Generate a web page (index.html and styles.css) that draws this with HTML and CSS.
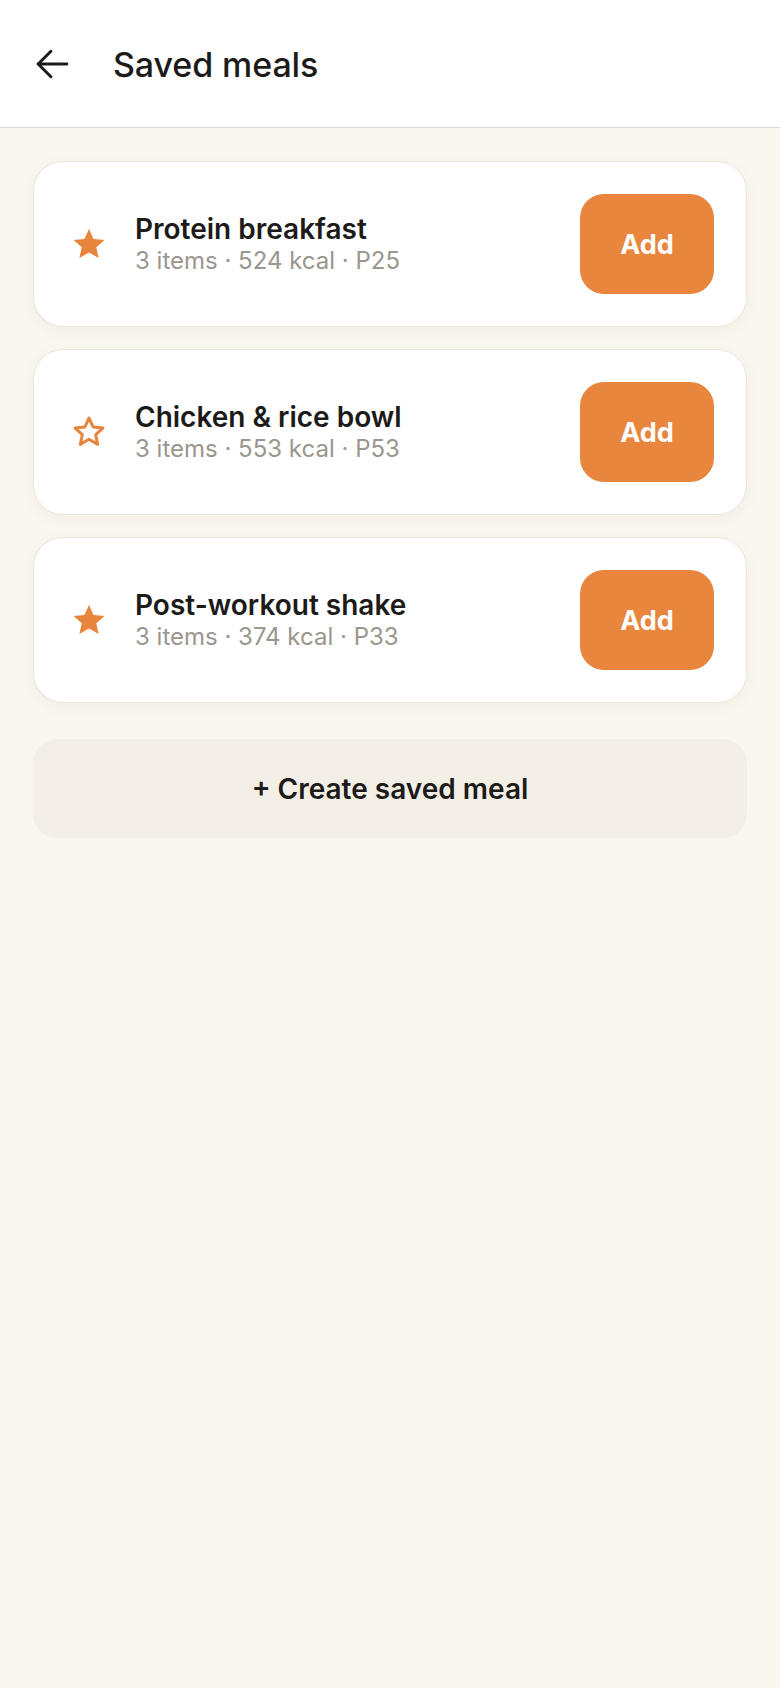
FILE: index.html
```html
<!DOCTYPE html>
<html lang="en">
<head>
  <meta charset="UTF-8">
  <meta name="viewport" content="width=device-width, initial-scale=1.0">
  <title>Saved meals</title>
  <link rel="stylesheet" href="styles.css">
</head>
<body>
  <div class="app">
    <div class="top-bar">
      <button class="back-btn" aria-label="Back">
        <svg width="34" height="34" viewBox="0 0 32 32" fill="none" stroke="#1c1b19" stroke-width="2.8" stroke-linecap="round" stroke-linejoin="round">
          <path d="M30 16H3"/>
          <path d="M15 4L3 16l12 12"/>
        </svg>
      </button>
      <h1>Saved meals</h1>
    </div>

    <div class="meal-list">
      <!-- saved meal cards -->
      <div class="meal-card">
        <div class="star">
          <svg width="38" height="38" viewBox="0 0 24 24"><path d="M12 2.5l2.9 6.3 6.9.7-5.2 4.6 1.5 6.8L12 17.4l-6.1 3.5 1.5-6.8-5.2-4.6 6.9-.7z" fill="#e8853d"/></svg>
        </div>
        <div class="meal-info">
          <div class="meal-name">Protein breakfast</div>
          <div class="meal-meta">3 items · 524 kcal · P25</div>
        </div>
        <button class="add-btn">Add</button>
      </div>

      <div class="meal-card">
        <div class="star">
          <svg width="38" height="38" viewBox="0 0 24 24"><path d="M12 3.2l2.6 5.6 6.2.7-4.6 4.2 1.3 6.1L12 16.6l-5.5 3.2 1.3-6.1-4.6-4.2 6.2-.7z" fill="none" stroke="#e8853d" stroke-width="1.9" stroke-linejoin="round"/></svg>
        </div>
        <div class="meal-info">
          <div class="meal-name">Chicken &amp; rice bowl</div>
          <div class="meal-meta">3 items · 553 kcal · P53</div>
        </div>
        <button class="add-btn">Add</button>
      </div>

      <div class="meal-card">
        <div class="star">
          <svg width="38" height="38" viewBox="0 0 24 24"><path d="M12 2.5l2.9 6.3 6.9.7-5.2 4.6 1.5 6.8L12 17.4l-6.1 3.5 1.5-6.8-5.2-4.6 6.9-.7z" fill="#e8853d"/></svg>
        </div>
        <div class="meal-info">
          <div class="meal-name">Post-workout shake</div>
          <div class="meal-meta">3 items · 374 kcal · P33</div>
        </div>
        <button class="add-btn">Add</button>
      </div>

      <button class="create-btn">+ Create saved meal</button>
    </div>
  </div>
</body>
</html>
```

FILE: styles.css
```css
* {
  box-sizing: border-box;
  margin: 0;
  padding: 0;
}
body, html {
  font-family: 'Inter', 'Noto Sans', sans-serif;
  background-color: #faf7f0;
  color: #1c1b19;
  height: 100%;
}
.app {
  min-height: 100vh;
  display: flex;
  flex-direction: column;
}
.top-bar {
  height: 128px;
  background-color: #ffffff;
  border-bottom: 1px solid #dedad3;
  display: flex;
  align-items: center;
  padding: 0 35px;
  gap: 44px;
}
.back-btn {
  background: none;
  border: none;
  display: flex;
  cursor: pointer;
}
.top-bar h1 {
  font-size: 34px;
  font-weight: 500;
  letter-spacing: -0.1px;
  margin-top: 2px;
}
.meal-list {
  padding: 33px 33px;
  display: flex;
  flex-direction: column;
  gap: 22px;
}
.meal-card {
  display: flex;
  align-items: center;
  background-color: #ffffff;
  border: 1px solid #ebe6dc;
  border-radius: 30px;
  padding: 32px 32px 32px 33px;
  box-shadow: 0 4px 14px rgba(120, 100, 70, 0.06);
}
.star {
  width: 44px;
  display: flex;
  justify-content: center;
  margin-right: 24px;
}
.meal-info {
  flex-grow: 1;
  padding-top: 2px;
}
.meal-name {
  font-size: 28px;
  font-weight: 600;
  line-height: 32px;
}
.meal-meta {
  font-size: 24px;
  color: #9b968e;
  line-height: 32px;
}
.add-btn {
  width: 134px;
  height: 100px;
  background-color: #e8863d;
  color: #ffffff;
  border: none;
  border-radius: 24px;
  font-family: inherit;
  font-size: 27px;
  font-weight: 700;
  cursor: pointer;
}
.create-btn {
  margin-top: 14px;
  height: 99px;
  background-color: #f3efe7;
  border: none;
  border-radius: 24px;
  font-family: inherit;
  font-size: 28px;
  font-weight: 600;
  color: #1c1b19;
  cursor: pointer;
}
```
